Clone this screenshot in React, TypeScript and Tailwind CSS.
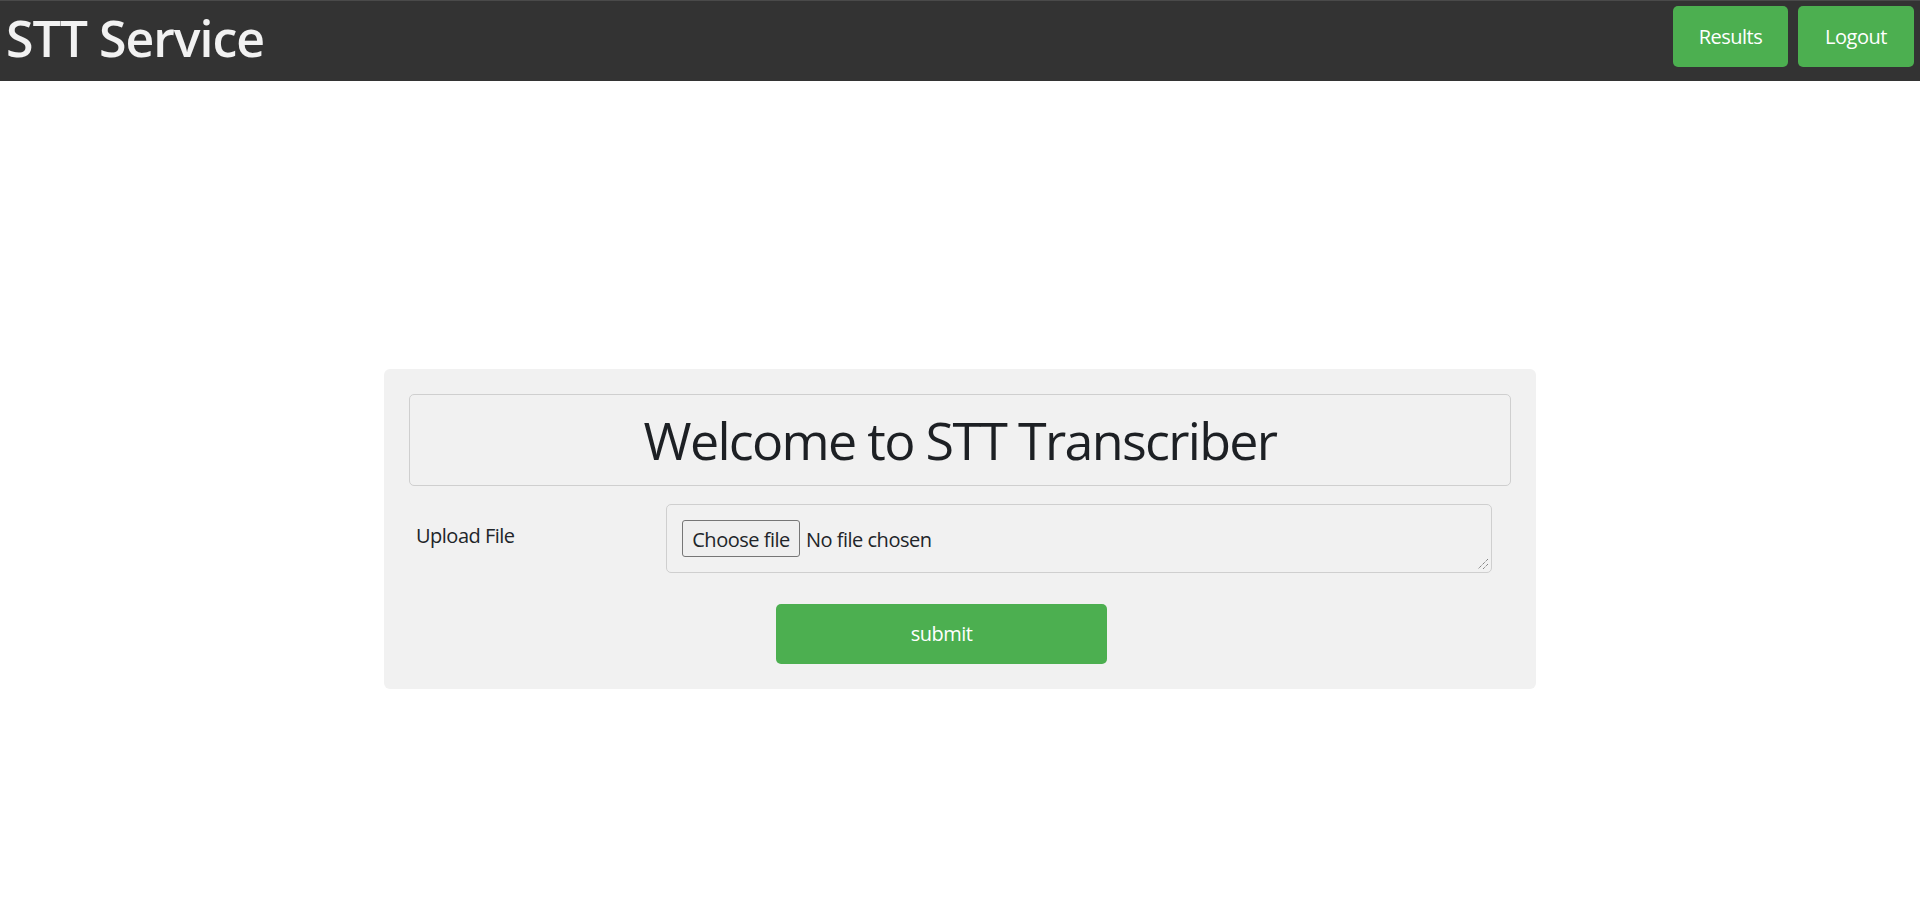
import React from "react";

const font = { fontFamily: '"Open Sans", "Noto Sans", sans-serif' };

const App: React.FC = () => {
  return (
    <div className="min-h-[915px] bg-white text-[#212529]" style={font}>
      {/* top bar */}
      <header className="h-[81px] bg-[#333333] border-t border-[#4a4a4a] flex items-start justify-between pl-[6px] pr-[6px]">
        <h1 className="mt-[12px] text-[50px] font-semibold text-[#f2f2f2] tracking-[-1px] leading-none">STT Service</h1>
        <div className="flex gap-[10px] pt-[5px]">
          <button className="w-[115px] h-[61px] rounded-[5px] bg-[#4caf50] text-white text-[20px] tracking-[-0.5px]">
            Results
          </button>
          <button className="w-[116px] h-[61px] rounded-[5px] bg-[#4caf50] text-white text-[20px] tracking-[-0.5px]">
            Logout
          </button>
        </div>
      </header>

      <main className="flex justify-center pt-[288px]">
        <div className="w-[1152px] bg-[#f1f1f1] rounded-[6px] px-[25px] pt-[25px] pb-[25px]">
          <div className="h-[92px] border border-[#cfcfcf] rounded-[5px] flex items-center justify-center">
            <h2 className="text-[52px] font-medium tracking-[-1.7px] leading-none text-[#1d2024]">Welcome to STT Transcriber</h2>
          </div>

          <div className="flex mt-[18px]">
            <label className="w-[257px] pl-[7px] pt-[18px] text-[20px] tracking-[-0.5px] leading-[28px]">Upload File</label>
            <div className="relative w-[826px] h-[69px] border border-[#cfcfcf] rounded-[5px] px-[15px] pt-[15px]">
              <div className="flex items-center">
                <span className="h-[37px] w-[118px] pt-[3px] border border-[#767676] rounded-[3px] bg-[#efefef] text-[20px] tracking-[-0.5px] flex items-center justify-center">
                  Choose file
                </span>
                <span className="ml-[6px] pt-[3px] text-[20px] tracking-[-0.5px]">No file chosen</span>
              </div>
              <svg className="absolute right-[2px] bottom-[2px]" width="12" height="12" viewBox="0 0 12 12">
                <path d="M11 1 L1 11 M11 6 L6 11" stroke="#555" strokeWidth="1" strokeDasharray="1 1" />
              </svg>
            </div>
          </div>

          <button className="mt-[31px] ml-[367px] w-[331px] h-[60px] rounded-[5px] bg-[#4caf50] text-white text-[20px] tracking-[-0.5px]">
            submit
          </button>
        </div>
      </main>
    </div>
  );
};

export default App;
